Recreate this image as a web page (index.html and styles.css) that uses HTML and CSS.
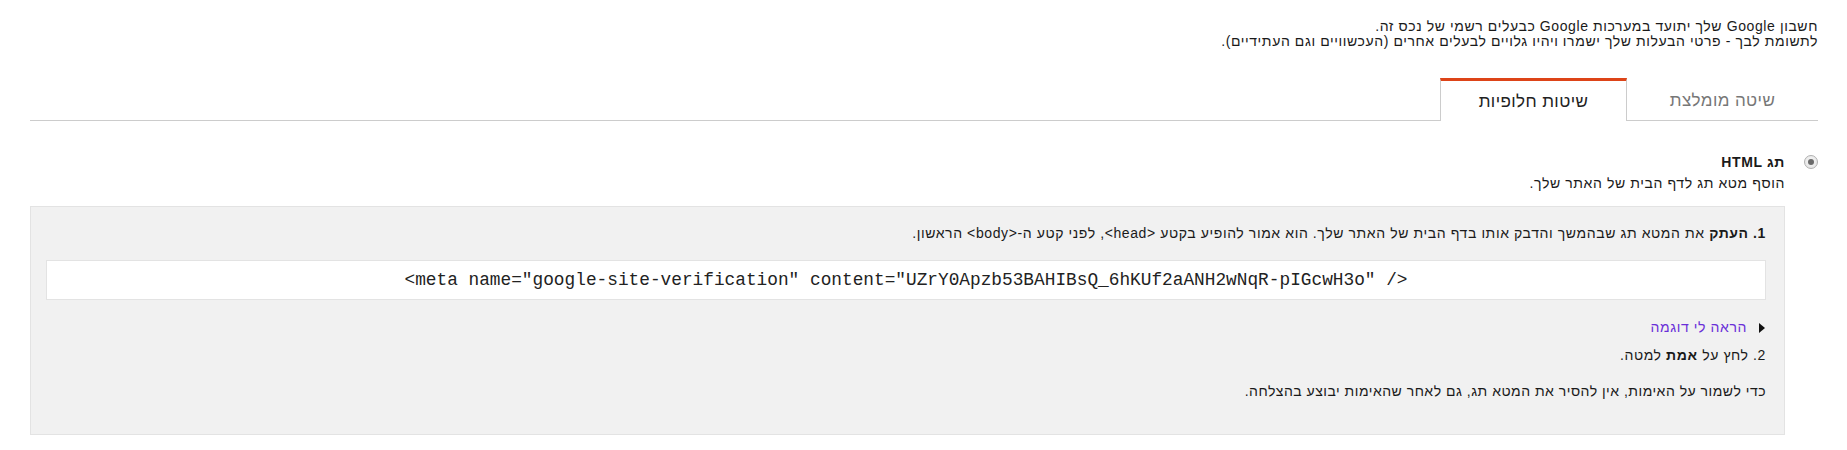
FILE: index.html
```html
<!DOCTYPE html>
<html lang="he" dir="rtl">
<head>
<meta charset="utf-8">
<link rel="stylesheet" href="styles.css">
</head>
<body>
<div class="page">
  <div class="intro">
    <div>חשבון Google שלך יתועד במערכות Google כבעלים רשמי של נכס זה.</div>
    <div>לתשומת לבך - פרטי הבעלות שלך ישמרו ויהיו גלויים לבעלים אחרים (העכשוויים וגם העתידיים).</div>
  </div>

  <div class="tabs">
    <div class="tab tab-inactive">שיטה מומלצת</div>
    <div class="tab tab-active">שיטות חלופיות</div>
    <div class="tab-fill"></div>
  </div>

  <div class="option">
    <span class="radio"><span class="radio-dot"></span></span>
    <div class="option-body">
      <div class="option-title">תג HTML</div>
      <div class="option-sub">הוסף מטא תג לדף הבית של האתר שלך.</div>
      <div class="panel">
        <div class="step"><b>1. העתק</b> את המטא תג שבהמשך והדבק אותו בדף הבית של האתר שלך. הוא אמור להופיע בקטע &lt;head&gt;, לפני קטע ה-&lt;body&gt; הראשון.</div>
        <div class="code" dir="ltr">&lt;meta name="google-site-verification" content="UZrY0Apzb53BAHIBsQ_6hKUf2aANH2wNqR-pIGcwH3o" /&gt;</div>
        <div class="example"><span class="arrow"></span><a class="example-link" href="#">הראה לי דוגמה</a></div>
        <div class="step2">2. לחץ על <b>אמת</b> למטה.</div>
        <div class="note">כדי לשמור על האימות, אין להסיר את המטא תג, גם לאחר שהאימות יבוצע בהצלחה.</div>
      </div>
    </div>
  </div>
</div>
</body>
</html>
```

FILE: styles.css
```css
html, body {
  margin: 0;
  padding: 0;
  background: #ffffff;
}

body {
  font-family: Arial, "Liberation Sans", sans-serif;
  font-size: 14px;
  letter-spacing: 0.6px;
  line-height: 15px;
  color: #1a1a1a;
}

.page {
  padding: 19px 29px 0 30px;
}

.intro {
  line-height: 15px;
}

.tabs {
  display: flex;
  margin-top: 29px;
  height: 43px;
}

.tab {
  box-sizing: border-box;
  display: flex;
  align-items: center;
  justify-content: center;
  font-size: 17px;
  letter-spacing: 0.4px;
  padding-top: 2px;
}

.tab-inactive {
  width: 191px;
  color: #777777;
  border-bottom: 1px solid #cccccc;
}

.tab-active {
  width: 187px;
  color: #222222;
  border-top: 3px solid #dd4418;
  border-left: 1px solid #cccccc;
  border-right: 1px solid #cccccc;
  padding-top: 0;
}

.tab-fill {
  flex: 1;
  border-bottom: 1px solid #cccccc;
}

.option {
  display: flex;
  align-items: flex-start;
  margin-top: 33px;
}

.radio {
  box-sizing: border-box;
  flex: 0 0 14px;
  width: 14px;
  height: 14px;
  margin-top: 1px;
  margin-left: 19px;
  border: 1px solid #b0b0b0;
  border-radius: 50%;
  background: radial-gradient(circle at 50% 40%, #f6f6f6, #e2e2e2);
  display: flex;
  align-items: center;
  justify-content: center;
}

.radio-dot {
  width: 6px;
  height: 6px;
  border-radius: 50%;
  background: #6a6a6a;
}

.option-body {
  flex: 1;
}

.option-title {
  font-weight: bold;
  font-size: 14px;
  line-height: 16px;
}

.option-sub {
  margin-top: 6px;
}

.panel {
  margin-top: 15px;
  background: #f1f1f1;
  border: 1px solid #e3e3e3;
  padding: 19px 18px 35px 15px;
}

.code {
  margin-top: 19px;
  background: #ffffff;
  border: 1px solid #e3e3e3;
  height: 38px;
  line-height: 38px;
  text-align: center;
  font-family: "Liberation Mono", "Courier New", monospace;
  font-size: 17.8px;
  letter-spacing: 0;
  color: #222222;
  white-space: nowrap;
  overflow: hidden;
}

.example {
  margin-top: 20px;
  display: flex;
  align-items: center;
}

.arrow {
  width: 0;
  height: 0;
  border-top: 5px solid transparent;
  border-bottom: 5px solid transparent;
  border-left: 6px solid #111111;
  margin-right: 1px;
  margin-left: 12px;
}

.example-link {
  color: #6a2fd8;
  text-decoration: none;
}

.step2 {
  margin-top: 13px;
}

.note {
  margin-top: 21px;
  letter-spacing: 0.5px;
}
```
